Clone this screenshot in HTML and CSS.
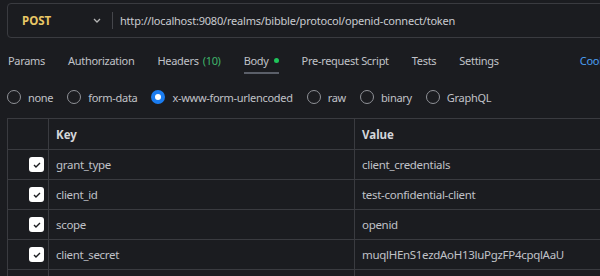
FILE: index.html
```html
<!DOCTYPE html>
<html lang="en">
<head>
    <meta charset="UTF-8">
    <meta name="viewport" content="width=device-width, initial-scale=1.0">
    <title>Token request</title>
    <link rel="stylesheet" href="styles.css">
</head>
<body>
    <div class="url-bar">
        <div class="method">
            <span class="method-name">POST</span>
            <svg class="chevron" width="8" height="5" viewBox="0 0 8 5"><path d="M1 1l3 3 3-3" fill="none" stroke="#b5b5b5" stroke-width="1.3"/></svg>
        </div>
        <div class="url">http://localhost:9080/realms/bibble/protocol/openid-connect/token</div>
    </div>

    <div class="tabs">
        <span class="tab">Params</span>
        <span class="tab">Authorization</span>
        <span class="tab">Headers <span class="count">(10)</span></span>
        <span class="tab active">Body <span class="dot"></span></span>
        <span class="tab">Pre-request Script</span>
        <span class="tab">Tests</span>
        <span class="tab">Settings</span>
        <span class="tab link">Cookies</span>
    </div>

    <div class="body-types">
        <label class="radio"><span class="circle"></span>none</label>
        <label class="radio"><span class="circle"></span>form-data</label>
        <label class="radio"><span class="circle checked"></span>x-www-form-urlencoded</label>
        <label class="radio"><span class="circle"></span>raw</label>
        <label class="radio"><span class="circle"></span>binary</label>
        <label class="radio"><span class="circle"></span>GraphQL</label>
    </div>

    <div class="params">
        <div class="row head">
            <div class="cell check"></div>
            <div class="cell key">Key</div>
            <div class="cell value">Value</div>
        </div>
        <div class="row">
            <div class="cell check"><span class="box"><svg width="8" height="6" viewBox="0 0 8 6"><path d="M1 3l2 2 4-4" fill="none" stroke="#1b1c20" stroke-width="1.4"/></svg></span></div>
            <div class="cell key">grant_type</div>
            <div class="cell value">client_credentials</div>
        </div>
        <div class="row">
            <div class="cell check"><span class="box"><svg width="8" height="6" viewBox="0 0 8 6"><path d="M1 3l2 2 4-4" fill="none" stroke="#1b1c20" stroke-width="1.4"/></svg></span></div>
            <div class="cell key">client_id</div>
            <div class="cell value">test-confidential-client</div>
        </div>
        <div class="row">
            <div class="cell check"><span class="box"><svg width="8" height="6" viewBox="0 0 8 6"><path d="M1 3l2 2 4-4" fill="none" stroke="#1b1c20" stroke-width="1.4"/></svg></span></div>
            <div class="cell key">scope</div>
            <div class="cell value">openid</div>
        </div>
        <div class="row">
            <div class="cell check"><span class="box"><svg width="8" height="6" viewBox="0 0 8 6"><path d="M1 3l2 2 4-4" fill="none" stroke="#1b1c20" stroke-width="1.4"/></svg></span></div>
            <div class="cell key">client_secret</div>
            <div class="cell value">muqlHEnS1ezdAoH13luPgzFP4cpqlAaU</div>
        </div>
        <div class="row">
            <div class="cell check"></div>
            <div class="cell key"></div>
            <div class="cell value"></div>
        </div>
    </div>
</body>
</html>
```

FILE: styles.css
```css
body {
    font-family: "Noto Sans", sans-serif;
    font-size: 11.5px;
    letter-spacing: -0.3px;
    margin: 0;
    padding: 3px 0 0 7px;
    background-color: #1b1c20;
    color: #c0c2c8;
    overflow: hidden;
    width: 700px;
    height: 276px;
}
.url-bar {
    display: flex;
    align-items: center;
    height: 33px;
    border: 1px solid #3a3b40;
    border-radius: 4px;
    width: 650px;
}
.method {
    display: flex;
    align-items: center;
    justify-content: space-between;
    width: 79px;
    padding: 0 11px 0 14px;
    height: 17px;
    border-right: 1px solid #45464b;
}
.method-name {
    color: #e9c766;
    font-weight: bold;
    letter-spacing: 0;
}
.url {
    padding-left: 7px;
    color: #c9cbd0;
    font-size: 11px;
    letter-spacing: -0.2px;
    white-space: nowrap;
}
.tabs {
    display: flex;
    align-items: center;
    gap: 23px;
    height: 45px;
    margin-left: 1px;
    white-space: nowrap;
    font-size: 11px;
    letter-spacing: -0.3px;
}
.tab {
    line-height: 16px;
    position: relative;
    display: flex;
    align-items: center;
}
.tab .count {
    color: #3fb46a;
    margin-left: 4px;
}
.tab.active::after {
    content: "";
    position: absolute;
    left: 0;
    right: 0;
    bottom: -5px;
    height: 2px;
    background: #5b5f69;
}
.dot {
    width: 5px;
    height: 5px;
    border-radius: 50%;
    background: #1fc45a;
    margin-left: 5px;
}
.tab.link {
    color: #4a9df0;
    margin-left: 58px;
}
.body-types {
    display: flex;
    align-items: center;
    gap: 14px;
    height: 28px;
    margin-bottom: 7px;
    white-space: nowrap;
    font-size: 11px;
    letter-spacing: -0.3px;
}
.radio {
    display: flex;
    align-items: center;
}
.circle {
    width: 14px;
    height: 14px;
    border: 1.5px solid #8f9197;
    border-radius: 50%;
    margin-right: 7px;
    box-sizing: border-box;
}
.circle.checked {
    border: 4px solid #1a7cf0;
    background: #fff;
}
.params {
    border-top: 1px solid #3a3b40;
    border-left: 1px solid #3a3b40;
}
.row {
    display: grid;
    grid-template-columns: 41px 306px 1fr;
    height: 30px;
    box-sizing: border-box;
    border-bottom: 1px solid #3a3b40;
}
.row.head {
    height: 31px;
}
.cell {
    display: flex;
    align-items: center;
    padding-left: 7px;
    border-right: 1px solid #3a3b40;
}
.head .cell {
    font-weight: bold;
    color: #d4d6da;
    letter-spacing: 0;
}
.cell.check {
    justify-content: flex-end;
    padding-right: 4px;
}
.box {
    width: 15px;
    height: 15px;
    background: #fff;
    border-radius: 3px;
    display: flex;
    align-items: center;
    justify-content: center;
}
```
